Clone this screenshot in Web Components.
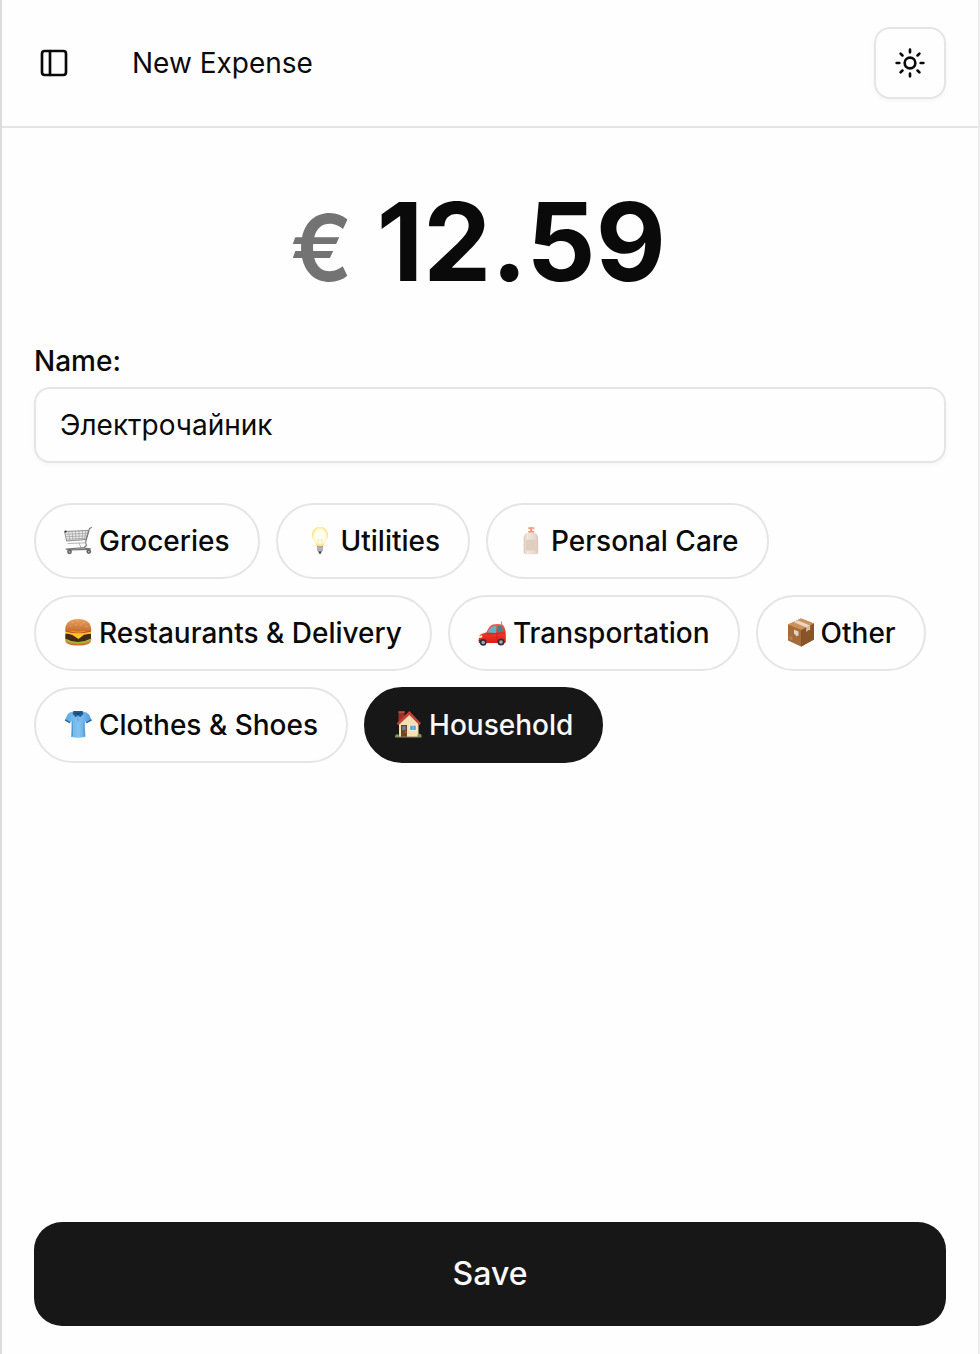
<!DOCTYPE html>
<html lang="en">
<head>
<meta charset="utf-8">
<meta name="viewport" content="width=device-width, initial-scale=1">
<title>New Expense</title>
<style>
  :root {
    --fg: #0a0a0a;
    --muted: #737373;
    --border: #e5e5e5;
    --primary: #171717;
    --surface: #fefefe;
  }
  body {
    margin: 0;
    background: var(--surface);
    color: var(--fg);
    font: 400 28px/40px Inter, "Liberation Sans", sans-serif;
  }
</style>
</head>
<body>
<expense-app>
  <app-header slot="header">New Expense</app-header>
  <amount-field currency="€" value="12.59"></amount-field>
  <text-field label="Name:" value="Электрочайник"></text-field>
  <category-list>
    <category-chip icon="cart">Groceries</category-chip>
    <category-chip icon="bulb">Utilities</category-chip>
    <category-chip icon="lotion">Personal Care</category-chip>
    <category-chip icon="burger">Restaurants &amp; Delivery</category-chip>
    <category-chip icon="car">Transportation</category-chip>
    <category-chip icon="box">Other</category-chip>
    <category-chip icon="shirt">Clothes &amp; Shoes</category-chip>
    <category-chip icon="house" selected>Household</category-chip>
  </category-list>
  <save-button slot="footer">Save</save-button>
</expense-app>

<script>
'use strict';

// category pictures, all on a 28x28 grid
const ICONS = {
  cart: `
    <g fill="none" stroke-linecap="round" stroke-linejoin="round">
      <path d="M1 4.5 24.5 3.5 22 12.5 3 14z" fill="#ededed" stroke="#8c8c8c"/>
      <path d="M2 7.3 24 6.3M2.4 9.8 23.3 8.8M2.8 12.2 22.6 11.2M4.5 4.4 6 13.8M8 4.2 9 13.6M11.5 4.1 12 13.4M15 4 15 13.1M18.5 3.8 18 12.9M21.7 3.7 20.6 12.7" stroke="#9b9b9b" stroke-width=".7"/>
      <path d="M27.5.5 25.5 1.5 21.5 15.5 22.5 18.5 20 20.5" stroke="#777" stroke-width="1.1"/>
      <path d="M4 16.5 21.5 15.8M15 16.2 17 20.5" stroke="#b3b3b3"/>
      <path d="M2 22 18 20.8 26.5 21.8M2 22 5 22.8 25 22.4" stroke="#777" stroke-width="1.2"/>
    </g>
    <circle cx="1.6" cy="4.6" r="1.1" fill="#333"/>
    <circle cx="5.5" cy="24.8" r="2.4" fill="#626262"/><circle cx="5.5" cy="24.8" r=".9" fill="#bbb"/>
    <circle cx="24.8" cy="24.6" r="2.4" fill="#626262"/><circle cx="24.8" cy="24.6" r=".9" fill="#bbb"/>`,
  bulb: `
    <defs><radialGradient id="g" cy=".48">
      <stop offset="0" stop-color="#fffef5"/><stop offset=".65" stop-color="#fffde6"/>
      <stop offset=".88" stop-color="#fdf0a8"/><stop offset="1" stop-color="#f3dc85"/>
    </radialGradient></defs>
    <path d="M14 0C9.2 0 6 3.5 6 8c0 4.6 3.8 6.3 4.6 11.200h6.800C18.200 14.300 22 12.600 22 8c0-4.500-3.200-8-8-8z" fill="url(#g)"/>
    <path d="M12.600 18.500 12 12.500l2 1 2-1-.6 6" fill="none" stroke="#f0dfa6" stroke-width=".6"/>
    <path d="M10.800 18.700q3.200 1.200 6.400 0l-.4 5-1.500 1.300h-2.600l-1.500-1.300z" fill="#9a999c"/>
    <path d="M11 20.800q3 1 6 0M11.200 22.700q2.800 1 5.600 0" fill="none" stroke="#d6d5d8" stroke-width=".8"/>
    <path d="M12.300 24.500h3.400l-.8 2.200h-1.800z" fill="#4b494d"/>`,
  lotion: `
    <defs><linearGradient id="g">
      <stop offset="0" stop-color="#dccabd"/><stop offset=".25" stop-color="#f0e6dd"/>
      <stop offset=".75" stop-color="#e8dbd0"/><stop offset="1" stop-color="#d8c5b8"/>
    </linearGradient></defs>
    <path d="M12 .5q3.500-1 6.500 0l.4 1.300H16.200V4h2v2.500h-6V4H14V2l-2-.3z" fill="#f39b7d"/>
    <path d="M12 5.500h5.200q5 1 5 6V25q0 2.300-2.500 2.300H10Q7.600 27.300 7.600 25V11.500q0-5 4.400-6z" fill="url(#g)"/>
    <rect x="10" y="12.500" width="9.700" height="11" rx="1.500" fill="#dfcfc1"/>`,
  burger: `
    <defs><linearGradient id="g" x2="0" y2="1">
      <stop offset="0" stop-color="#e9a15d"/><stop offset="1" stop-color="#c46c2c"/>
    </linearGradient></defs>
    <path d="M2 18.500h24.300l.7 3c0 3.500-4.500 5-12.800 5S1.300 25 1.300 21.500z" fill="url(#g)"/>
    <path d="M1.500 18q6 4.500 12.500 4.500T27 18l.5 3Q21 24.600 14 24.600T1 21z" fill="#a7ba36"/>
    <path d="M1.300 14.500q12.700-3 25.700 0v5Q20.500 23 14 23T1.300 19.500z" fill="#472717"/>
    <path d="M1.200 11Q14 6 27.200 11l-.2 3.500-7 1.200-5.500 4.300-6.500-4.300-6.500-1.500z" fill="#f9c825"/>
    <path d="M1.600 10.800q12.400 5.500 25.300 0v2q-12.900 3-25.300 0z" fill="#db4a28"/>
    <path d="M1.200 11.500Q1 .2 14.200 0 27.400.2 27.200 11.500 14.200 14 1.200 11.500z" fill="url(#g)"/>
    <path d="M8 3.500h1M13.500 2h1M19 4h1M11.500 6h1M16.500 6.200h1M6 7h1M22 7.500h1" stroke="#f0bd84" stroke-linecap="round" stroke-width=".6"/>`,
  car: `
    <defs><linearGradient id="g" x2="0" y2="1">
      <stop offset="0" stop-color="#f6574a"/><stop offset="1" stop-color="#e01b16"/>
    </linearGradient></defs>
    <path d="m24 7-.6-4.500" stroke="#777" stroke-width=".8"/>
    <path d="M1 23.500Q-.3 16.500 3.500 15L8.500 13.300Q11.500 6 15 5.400q5.500-1 10 .6 2.500 3 2.800 9v8q0 1-1.300 1H2z" fill="url(#g)"/>
    <path d="M9.600 13.500q2.600-5.700 5.900-6.400l3-.3-.4 7.200z" fill="#5db4c7"/>
    <path d="m19.800 6.800 4 .3 1.300 5.700-5.500.7z" fill="#448396"/>
    <path d="M19 14.500v8M9 15l9-.6 9-.5" fill="none" stroke="#b91a16" stroke-width=".6"/>
    <path d="m1 17 3-.8.500 2-3.300 1z" fill="#fff2bd"/>
    <path d="M.6 21h3.700v2.700H1z" fill="#8b2020"/>
    <circle cx="5.200" cy="23.400" r="3.300" fill="#303238"/><circle cx="5.200" cy="23.400" r="1.700" fill="#a9adb2"/>
    <circle cx="23" cy="23" r="3.500" fill="#303238"/><circle cx="23" cy="23" r="1.800" fill="#a9adb2"/>`,
  box: `
    <path d="M2 5.500 15-.5 28 4.500v16L15 27.500 2 21.500z" fill="#a76b3a"/>
    <path d="M2 5.500 15-.5 28 4.500 15.500 11z" fill="#cb925a"/>
    <path d="M15.500 11 28 4.500v16L15.500 27.500z" fill="#8a532a"/>
    <path d="m7.500 3 4-1.800 12.700 5.300-4 2.100z" fill="#ead6c5"/>
    <path d="m20.200 8.600 4-2.100v4.700l-1.500-.2-2.500 2z" fill="#d7bda7"/>
    <path d="m8 10.500 4.500 2v4l-2 .8-2.500-3z" fill="#ddd3c9"/>
    <path d="m3.500 17 3 1.300v3l-3-1.300z" fill="#be824e"/>
    <path d="M15.500 11v16.500" stroke="#70431f" stroke-width=".5"/>`,
  shirt: `
    <defs><linearGradient id="g">
      <stop offset="0" stop-color="#5aa7df"/><stop offset=".5" stop-color="#82c4f1"/><stop offset="1" stop-color="#4f9bd6"/>
    </linearGradient></defs>
    <path d="M9.500.5Q5 1 3.500 3.500L.8 9.500l5 2.700 2-2.700L7 26q7 1.500 14.500 0l-1-16.500 2 2.700 5.300-2.700L25 3.500Q23 1 18.500.5z" fill="url(#g)"/>
    <path d="M9.500 0h9l1 2.800-3.300 3.400-2.200-2-2.300 2-3.200-3.400z" fill="#245b93"/>
    <path d="M10.800 1.300q3.200 1.500 6.400 0L14 4z" fill="#173f6b"/>
    <path d="m.8 9.500 5 2.700.5-1.200-5-2.800zM27.700 9.500l-5.200 2.700-.5-1.200 5.200-2.800z" fill="#27669f"/>
    <path d="M14 4v6.500M8 10q.8 8 .4 15M20.300 10q-.8 8-.3 15" fill="none" stroke="#3b83bd" stroke-width=".6"/>`,
  house: `
    <path d="M4.500.5h6V9l-6 4z" fill="#9d3028"/>
    <path d="M5 12.500 15.200 2.500 24.500 12.500V26H5z" fill="#f3dfb6"/>
    <path d="M15.300 0 27 12.300l-1.700 1.600L15.300 4 4.400 14.200 2.700 12.500z" fill="#c64036"/>
    <path d="M4.500.3h6.200v1.500H4.500z" fill="#cc5048"/>
    <path d="M7 14h6v12H7z" fill="#77401f"/><path d="M8.200 15.200h3.500v4H8.200z" fill="#5e86a8"/><circle cx="11.800" cy="21" r=".6" fill="#e7bd67"/>
    <path d="M15.300 13.800h7.200V20h-7.200z" fill="#fff6dc"/><path d="M16.200 14.600h5.500v4.500h-5.500z" fill="#4c9ed7"/>
    <path d="M19 14.600v4.500" stroke="#fff" stroke-width=".5"/>
    <path d="M1 26q.2-3 2.500-3l1.700 1.600V26zM23.500 26v-2.200q2.200-2 4 .2v2z" fill="#779c35"/>
    <path d="M1 25.500h26.500v1H1z" fill="#92826a"/>`
};

/** Page frame: header, form, footer pinned to the bottom. */
class ExpenseApp extends HTMLElement {
  constructor() {
    super();
    this.attachShadow({ mode: 'open' }).innerHTML = `
      <style>
        :host {
          box-sizing: border-box;
          display: flex; flex-direction: column;
          min-height: 100vh;
          border: solid #dcdcde;
          border-width: 0 2px;
          border-right-color: #ececee;
        }
        main { flex: 1; padding: 0 32px; }
        footer { padding: 28px 32px; }
      </style>
      <slot name="header"></slot>
      <main><slot></slot></main>
      <footer><slot name="footer"></slot></footer>
    `;
  }
}

/** Top bar with the sidebar toggle, title and theme switch. */
class AppHeader extends HTMLElement {
  constructor() {
    super();
    this.attachShadow({ mode: 'open' }).innerHTML = `
      <style>
        :host { display: block; }
        header {
          display: flex;
          align-items: center;
          min-height: 126px;
          padding: 0 32px 0 24px;
          border-bottom: 2px solid var(--border);
        }
        button {
          box-sizing: border-box;
          display: grid; place-items: center;
          padding: 0;
          border: 0;
          color: inherit;
          background: none;
          cursor: pointer;
        }
        svg {
          width: 32px; height: 32px;
          fill: none; stroke: currentColor; stroke-width: 2;
          stroke-linecap: round; stroke-linejoin: round;
        }
        .toggle { width: 56px; height: 56px; }
        .theme {
          width: 72px; height: 72px;
          border: 2px solid var(--border);
          border-radius: 16px;
          box-shadow: 0 2px 4px rgba(0,0,0,.04);
        }
        h1 { flex: 1; margin: 0 0 0 50px; font: inherit; }
      </style>
      <header>
        <button class="toggle" type="button" aria-label="Toggle sidebar">
          <svg viewBox="0 0 24 24"><rect x="3" y="3" width="18" height="18" rx="2"/><path d="M9 3v18"/></svg>
        </button>
        <h1><slot></slot></h1>
        <button class="theme" type="button" aria-label="Toggle theme">
          <svg viewBox="0 0 24 24"><circle cx="12" cy="12" r="4"/><path d="M12 2v2M12 20v2M4.930 4.930l1.410 1.410M17.660 17.660l1.410 1.410M2 12h2M20 12h2M6.340 17.660l-1.410 1.410M19.070 4.930l-1.410 1.410"/></svg>
        </button>
      </header>
    `;
  }
}

/** <amount-field currency value> */
class AmountField extends HTMLElement {
  connectedCallback() {
    if (this.shadowRoot) return;
    this.attachShadow({ mode: 'open' }).innerHTML = `
      <style>
        :host { display: block; padding: 48px 24px 33px 0; }
        label {
          display: flex;
          align-items: baseline;
          justify-content: center;
          gap: 24px;
          line-height: 132px;
        }
        span { font-size: 92px; font-weight: 600; color: var(--muted); }
        input {
          field-sizing: content;
          min-width: 0;
          padding: 0;
          border: 0;
          outline: 0;
          background: none;
          color: inherit;
          font: inherit;
          font-size: 108px;
          font-weight: 700;
        }
      </style>
      <label>
        <span>${this.getAttribute('currency')}</span>
        <input type="text" inputmode="decimal" aria-label="Amount" value="${this.getAttribute('value')}">
      </label>
    `;
  }
}

/** <text-field label value> */
class TextField extends HTMLElement {
  connectedCallback() {
    if (this.shadowRoot) return;
    this.attachShadow({ mode: 'open' }).innerHTML = `
      <style>
        :host { display: flex; flex-direction: column; gap: 12px; }
        label { font-weight: 500; line-height: 28px; }
        input {
          box-sizing: border-box;
          width: 100%;
          height: 76px;
          padding: 0 24px;
          border: 2px solid var(--border);
          border-radius: 16px;
          background: none;
          box-shadow: 0 2px 4px rgba(0,0,0,.04);
          color: inherit;
          font: inherit;
        }
        input:focus-visible { outline: 2px solid var(--muted); }
      </style>
      <label for="field">${this.getAttribute('label')}</label>
      <input id="field" type="text" value="${this.getAttribute('value')}">
    `;
  }
}

/** Wrapping row of chips; one is selected at a time. */
class CategoryList extends HTMLElement {
  constructor() {
    super();
    this.attachShadow({ mode: 'open' }).innerHTML = `
      <style>
        :host { display: flex; flex-wrap: wrap; gap: 16px; padding-top: 40px; }
      </style>
      <slot></slot>
    `;
    this.addEventListener('click', (e) => {
      const chip = e.target.closest('category-chip');
      if (!chip) return;
      for (const c of this.children) c.toggleAttribute('selected', c === chip);
    });
  }
}

/** <category-chip icon selected> */
class CategoryChip extends HTMLElement {
  static get observedAttributes() { return ['selected']; }

  connectedCallback() {
    if (this.shadowRoot) return;
    this.attachShadow({ mode: 'open' }).innerHTML = `
      <style>
        :host { display: block; }
        button {
          box-sizing: border-box;
          display: flex; align-items: center; gap: 7px;
          height: 76px;
          padding: 0 28px;
          border: 2px solid var(--border);
          border-radius: 38px;
          background: none;
          color: inherit;
          font: inherit;
          font-weight: 500;
          white-space: nowrap;
          cursor: pointer;
        }
        svg { width: 28px; height: 28px; overflow: visible; }
        :host([selected]) button {
          background: var(--primary);
          border-color: var(--primary);
          color: #fafafa;
        }
      </style>
      <button type="button">
        <svg viewBox="0 0 28 28" aria-hidden="true">${ICONS[this.getAttribute('icon')]}</svg>
        <slot></slot>
      </button>
    `;
    this._sync();
  }

  attributeChangedCallback() { this._sync(); }

  _sync() {
    this.shadowRoot?.querySelector('button')
      .setAttribute('aria-pressed', this.hasAttribute('selected'));
  }
}

class SaveButton extends HTMLElement {
  constructor() {
    super();
    this.attachShadow({ mode: 'open' }).innerHTML = `
      <style>
        :host { display: block; }
        button {
          width: 100%;
          height: 104px;
          border: 0;
          border-radius: 28px;
          background: var(--primary);
          color: #fafafa;
          font: inherit;
          font-size: 32px;
          font-weight: 500;
          cursor: pointer;
        }
      </style>
      <button type="button"><slot></slot></button>
    `;
  }
}

customElements.define('expense-app', ExpenseApp);
customElements.define('app-header', AppHeader);
customElements.define('amount-field', AmountField);
customElements.define('text-field', TextField);
customElements.define('category-list', CategoryList);
customElements.define('category-chip', CategoryChip);
customElements.define('save-button', SaveButton);
</script>
</body>
</html>
